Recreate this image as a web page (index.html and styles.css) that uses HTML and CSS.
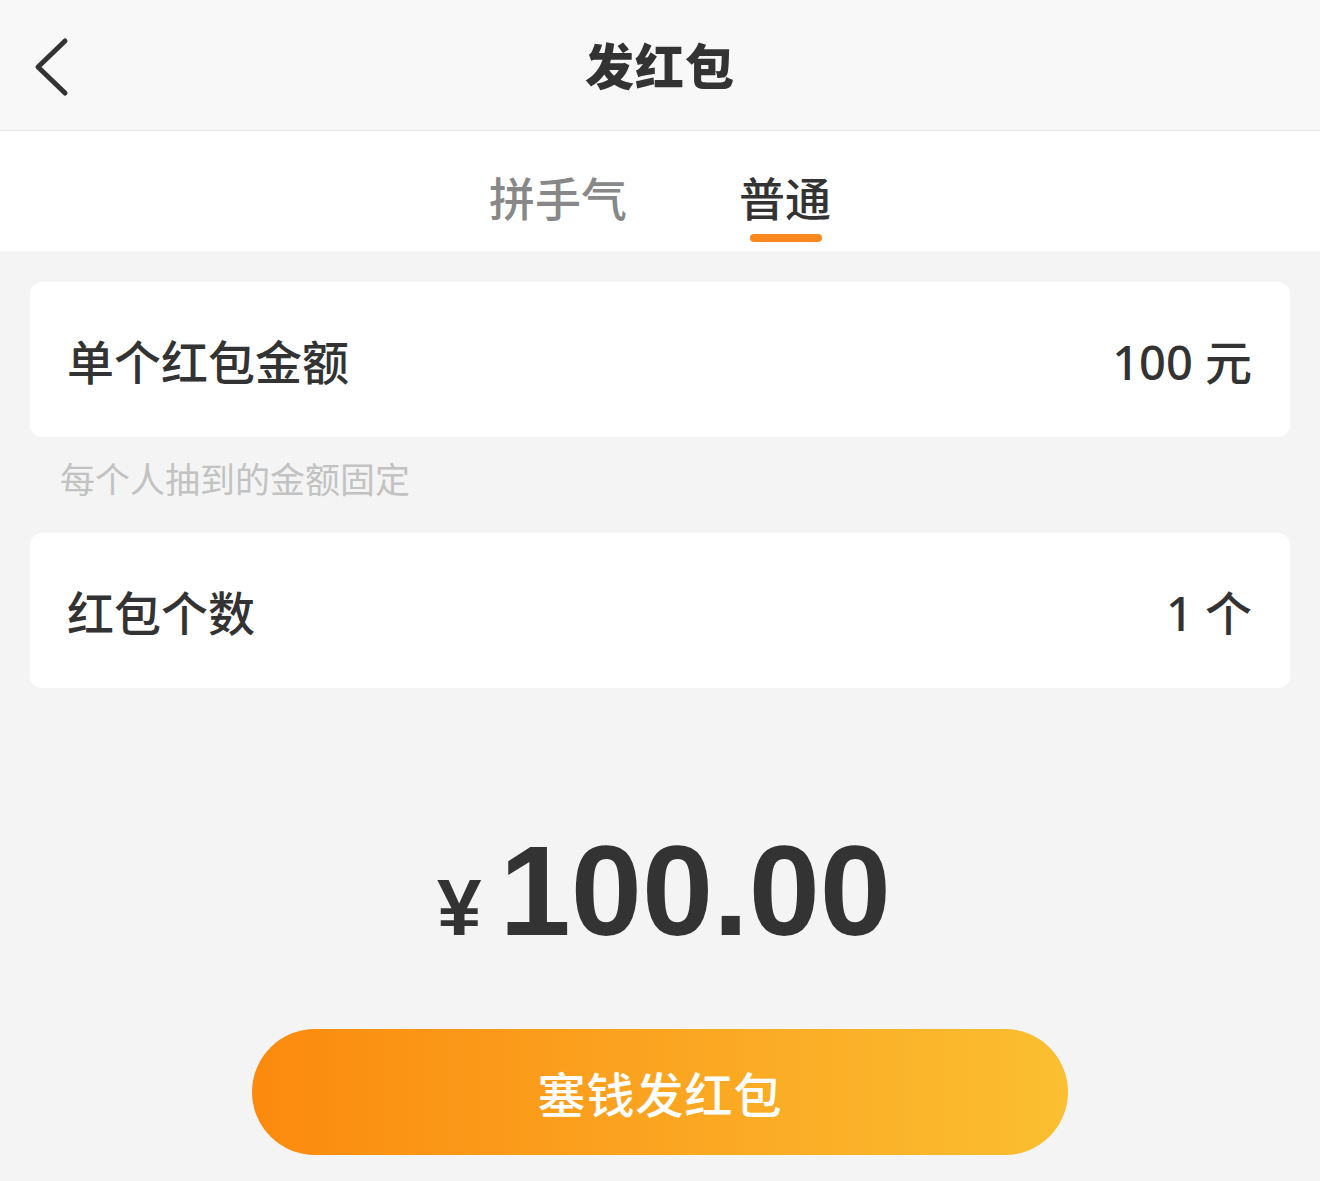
FILE: index.html
```html
<!DOCTYPE html>
<html lang="zh-CN">
<head>
<meta charset="utf-8">
<title>发红包</title>
<link rel="stylesheet" href="styles.css">
</head>
<body>
<div class="page">
  <header class="header">
    <a class="back" aria-label="返回">
      <svg width="40" height="60" viewBox="0 0 40 60"><polyline points="33,4 6,30 33,56" fill="none" stroke="#333" stroke-width="5" stroke-linecap="round" stroke-linejoin="round"/></svg>
    </a>
    <h1 class="title">发红包</h1>
  </header>
  <nav class="tabs">
    <div class="tab">拼手气</div>
    <div class="tab active">普通</div>
  </nav>
  <main class="content">
    <div class="card">
      <span class="label">单个红包金额</span>
      <span class="value">100 元</span>
    </div>
    <div class="hint">每个人抽到的金额固定</div>
    <div class="card">
      <span class="label">红包个数</span>
      <span class="value">1 个</span>
    </div>
    <div class="amount">
      <span class="yen">¥</span><span class="num">100.00</span>
    </div>
    <button class="submit">塞钱发红包</button>
  </main>
</div>
</body>
</html>
```
FILE: styles.css
```css
* { box-sizing: border-box; }
html, body { margin: 0; padding: 0; }
body {
  font-family: "Noto Sans CJK SC", "Noto Sans", sans-serif;
  background: #f4f4f4;
  color: #333;
}
.page { width: 1320px; min-height: 1181px; background: #f4f4f4; }
.header {
  position: relative;
  height: 131px;
  background: #f8f8f8;
  border-bottom: 1px solid #e6e6e6;
  display: flex;
  align-items: center;
  justify-content: center;
}
.back {
  position: absolute;
  left: 32px;
  top: 37px;
  display: block;
  width: 40px;
  height: 60px;
}
.back svg { display: block; }
.title {
  margin: 0;
  font-size: 49px;
  font-weight: 900;
  color: #333;
  letter-spacing: 1px;
  line-height: 1;
  padding-bottom: 4px;
}
.tabs {
  height: 120px;
  background: #fff;
  display: flex;
  justify-content: center;
  gap: 112px;
  padding-top: 37px;
}
.tab {
  position: relative;
  font-size: 46px;
  line-height: 56px;
  height: 56px;
  color: #888;
  font-weight: 500;
}
.tab.active { color: #333; }
.tab.active::after {
  content: "";
  position: absolute;
  left: 11px;
  right: 9px;
  top: 66px;
  height: 8px;
  border-radius: 4px;
  background: #f7891e;
}
.content {
  padding: 31px 30px 0;
  display: flex;
  flex-direction: column;
}
.card {
  height: 155px;
  background: #fff;
  border-radius: 12px;
  display: flex;
  align-items: center;
  justify-content: space-between;
  padding: 0 38px 0 37px;
}
.label {
  font-size: 47px;
  font-weight: 500;
  color: #333;
}
.value {
  font-family: "Noto Sans", "Noto Sans CJK SC", sans-serif;
  font-size: 47px;
  font-weight: 500;
  color: #333;
}
.hint {
  height: 96px;
  display: flex;
  align-items: center;
  padding: 0 0 16px 30px;
  font-size: 35px;
  color: #c2c2c2;
}
.amount {
  margin-top: 133px;
  height: 140px;
  display: flex;
  justify-content: center;
  align-items: baseline;
  padding-left: 8px;
  font-family: "Liberation Sans", Arial, sans-serif;
  font-weight: 700;
  color: #333;
  line-height: 140px;
}
.yen {
  font-size: 80px;
  margin-right: 18px;
}
.num {
  font-size: 128px;
  letter-spacing: 0;
}
.submit {
  align-self: center;
  margin-top: 68px;
  width: 816px;
  height: 126px;
  border: none;
  border-radius: 63px;
  background: linear-gradient(90deg, #fb8a0e 0%, #fba21f 45%, #fbbf31 100%);
  color: #fff;
  font-family: "Noto Sans CJK SC", sans-serif;
  font-size: 48px;
  font-weight: 500;
  letter-spacing: 1px;
  padding: 0;
}
```
